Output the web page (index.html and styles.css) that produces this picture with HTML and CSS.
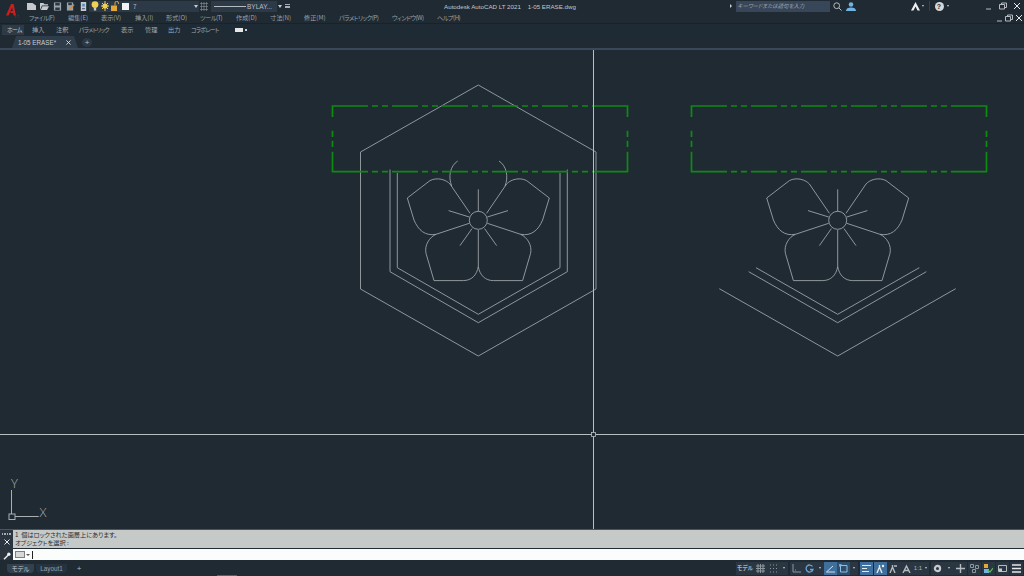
FILE: index.html
```html
<!DOCTYPE html>
<html lang="ja">
<head>
<meta charset="utf-8">
<title>Autodesk AutoCAD LT 2021</title>
<link rel="stylesheet" href="styles.css">
</head>
<body>
<div class="app">
  <header class="head">
    <div class="logo-col">
      <svg class="logo" viewBox="0 0 14 15"><path class="logo-a" d="M1 12.500 6 1h2.600L11 12.500H8.600L8.100 10H5.200L6 8h1.800L7.100 4.400 3.600 12.500z"/><text class="logo-lt" x="9.500" y="14.600">LT</text></svg>
    </div>
    <div class="head-main">
      <div class="row-top">
        <div class="qat">
          <svg class="qi" viewBox="0 0 9 9"><path class="f-lite" d="M0 1h5.500L9 3.500V8H0z"/></svg>
          <svg class="qi" viewBox="0 0 9 9"><path class="f-lite" d="M0 1h3.500l1 1.200H8v1.300H2L0 8z"/><path class="f-lite" d="M2.500 4.200H9L7 8H.8z"/></svg>
          <svg class="qi" viewBox="0 0 9 10"><path class="f-mid" d="M.5.500h8v9h-8z"/><path class="f-dark" d="M2 1h5v3H2zM2 6h5v3H2z"/></svg>
          <svg class="qi" viewBox="0 0 9 10"><path class="f-mid" d="M.5.500h7v9h-7z"/><path class="f-dark" d="M2 1h4v2.500H2z"/><path class="f-orange" d="M3 7 8 2.500l1 1L4 8z"/></svg>
          <svg class="qi" viewBox="0 0 9 10"><path class="f-lite" d="M1.500 0h6v10h-6z"/><path class="f-blue" d="M3 2h3v3H3z"/><path class="f-dark" d="M3 7h3v1H3z"/></svg>
        </div>
        <div class="layer-box">
          <svg class="li" viewBox="0 0 8 10"><circle class="f-yellow" cx="4" cy="3.600" r="3.400"/><path class="f-lite" d="M2.800 7h2.400v2.500H2.800z"/></svg>
          <svg class="li" viewBox="0 0 8 10"><circle class="f-yellow" cx="4" cy="5" r="2.600"/><path class="s-yellow" d="M4 0v10M0 5h8M1 2l6 6M7 2 1 8"/></svg>
          <svg class="li" viewBox="0 0 8 10"><path class="f-amber" d="M0 4.500h6V10H0z"/><path class="s-amber" d="M4 4.500V2a1.700 1.700 0 0 1 3.400 0v1"/></svg>
          <span class="swatch"></span>
          <span class="layer-num">7</span>
          <span class="caret caret-end"></span>
        </div>
        <svg class="hatch" viewBox="0 0 8 9"><path class="s-hatch" d="M0 1.500h8M0 4.500h8M0 7.500h8M1.500 0v9M4 0v9M6.500 0v9"/></svg>
        <div class="lw-box"><span class="lw-line"></span><span class="lw-text">BYLAY...</span></div>
        <span class="caret caret-lw"></span>
        <span class="mini-down"></span>
        <div class="title">Autodesk AutoCAD LT 2021&nbsp;&nbsp;&nbsp; 1-05 ERASE.dwg</div>
        <div class="top-right">
          <span class="tri-right"></span>
          <div class="search">キーワードまたは語句を入力</div>
          <svg class="mag" viewBox="0 0 9 9"><circle class="s-lite" cx="3.700" cy="3.700" r="2.900"/><path class="s-lite" d="m6 6 2.600 2.600"/></svg>
          <svg class="user" viewBox="0 0 10 9"><circle class="f-sky" cx="5" cy="2.500" r="2.300"/><path class="f-sky" d="M0 9c0-2.500 2-3.500 5-3.500s5 1 5 3.500z"/></svg>
          <svg class="acad-a" viewBox="0 0 9 9"><path class="f-white" d="M4.500 0 9 8.500H6.500L4.500 4.500 2.500 8.500H0z"/></svg>
          <span class="dot"></span>
          <span class="vsep"></span>
          <span class="help">?</span>
          <span class="dot"></span>
          <div class="win win-app">
            <svg class="wc" viewBox="0 0 8 8"><path class="s-lite" d="M1 7h5"/></svg>
            <svg class="wc" viewBox="0 0 8 8"><path class="s-lite" d="M.5 2.500h5v4.500h-5zM2.500 2.500V1h5v4.500h-2"/></svg>
            <svg class="wc" viewBox="0 0 8 8"><path class="s-white" d="m1 1 6 6M7 1 1 7"/></svg>
          </div>
        </div>
      </div>
      <nav class="row-menu">
        <span class="kana">ファイル(F)</span><span>編集(E)</span><span>表示(V)</span><span>挿入(I)</span><span>形式(O)</span><span class="kana">ツール(T)</span><span>作成(D)</span><span>寸法(N)</span><span>修正(M)</span><span class="kana">パラメトリック(P)</span><span class="kana">ウィンドウ(W)</span><span class="kana">ヘルプ(H)</span>
        <div class="win win-doc">
          <svg class="wd" viewBox="0 0 8 8"><path class="s-lite" d="M2 7h5"/></svg>
          <svg class="wd" viewBox="0 0 8 8"><path class="s-lite" d="M.5 2.500h5v4.500h-5zM2.500 2.500V1h5v4.500h-2"/></svg>
          <svg class="wd" viewBox="0 0 8 8"><path class="s-white" d="m1 1 6 6M7 1 1 7"/></svg>
        </div>
      </nav>
    </div>
  </header>
  <nav class="row-ribbon">
    <span class="rtab rtab-on kana-tight">ホーム</span><span class="rtab">挿入</span><span class="rtab">注釈</span><span class="rtab kana-tight">パラメトリック</span><span class="rtab">表示</span><span class="rtab">管理</span><span class="rtab">出力</span><span class="rtab kana-tight">コラボレート</span>
    <span class="rib-extra"><span class="rib-chip"></span><span class="rib-dot"></span></span>
  </nav>
  <div class="row-doc">
    <div class="doc-tab"><span>1-05 ERASE*</span><svg class="doc-x" viewBox="0 0 6 6"><path class="s-white" d="m.5.500 5 5M5.500.500l-5 5"/></svg></div>
    <span class="doc-plus">+</span>
  </div>
  <div class="strip"></div>

  <main class="canvas">
    <svg class="draw" viewBox="0 50 1024 479">
      <defs>
        <g id="flower">
          <circle cx="0" cy="0" r="9"/>
          <path d="M-8.300-7-28.300-36.300C-32-40.500-41-43.500-48.300-39.700L-71-22.300-64.300-.3C-60 10-53 16-42.300 14L-9 3"/>
          <path d="M8.300-7 28.300-36.300C32-40.500 41-43.500 48.300-39.700L71-22.300 64.300-.3C60 10 53 16 42.300 14L9 3"/>
          <path d="M0 9.700V46.300C-1.500 55-7 60.300-15 60.300H-44.300L-52.300 33C-54 25-49 17-42.300 14"/>
          <path d="M0 46.300C1.500 55 7 60.300 15 60.300H44.300L52.300 33C54 25 49 17 42.300 14"/>
          <path d="M0-31V-9M-29.700-9.700-9-3.300M29.700-9.700 9-3.300M-18.300 25.300-6.300 8.300M18.300 25.300 6.300 8.300"/>
        </g>
        <path id="frame" d="M368 106H332.500V117M372 106h6M382 106h6M392 106h26M422 106h6M432 106h6M442 106h26M472 106h6M482 106h6M492 106h26M522 106h6M532 106h6M542 106h26M572 106h6M582 106h6M592 106h35.500V117M332.500 130.700v6.300M332.500 140.700v6.300M332.500 151.700v20H368M372 171.700h6M382 171.700h6M392 171.700h26M422 171.700h6M432 171.700h6M442 171.700h26M472 171.700h6M482 171.700h6M492 171.700h26M522 171.700h6M532 171.700h6M542 171.700h26M572 171.700h6M582 171.700h6M592 171.700h35.500v-20M627.500 147v-6.300M627.500 137v-6.300"/>
      </defs>
      <g class="lines">
        <path d="M360.500 289V152L478.300 85 596 152V289L478.300 356z"/>
        <path d="M390 169.500V271.700L478.300 322.700 567.300 271.700V169.500"/>
        <path d="M397.300 173V267.700L478.300 314.300 560 267.700V173"/>
        <path d="M457.700 161C450 166 448 177 451.700 186M499 161C506.700 166 508.700 177 505 186"/>
        <use href="#flower" transform="translate(478.300 220.300)"/>
        <use href="#flower" transform="translate(837.700 220.300)"/>
        <path d="M719.300 288.700 837.700 356 955.700 288.700M748.700 271.700 837.700 322.700 926.300 271.700M756 267.700 837.700 314.300 919.300 267.700"/>
      </g>
      <g class="frames">
        <use href="#frame"/>
        <use href="#frame" transform="translate(359 0)"/>
      </g>
      <path class="cross" d="M593.500 50V529M0 434.500H1024"/>
      <rect class="pick" x="591.500" y="432.500" width="4" height="4"/>
      <g class="ucs">
        <path d="M11.500 490V514M15 516.500H38.700"/>
        <rect x="9" y="514" width="6" height="5.500"/>
        <text x="11" y="488">Y</text>
        <text x="39.500" y="517">X</text>
      </g>
    </svg>
  </main>

  <section class="cmd">
    <div class="cmd-side">
      <span class="grip"></span>
      <svg class="cmd-x" viewBox="0 0 6 6"><path class="s-white" d="m.5.500 5 5M5.500.500l-5 5"/></svg>
      <svg class="cmd-wrench" viewBox="0 0 8 8"><path class="s-wrench" d="M1 7.200 5 3.200"/><circle class="f-white" cx="5.800" cy="2.200" r="1.700"/></svg>
    </div>
    <div class="cmd-body">
      <div class="cmd-history">
        <div>1&nbsp; 個はロックされた画層上にあります。</div>
        <div>オブジェクトを選択 :</div>
      </div>
      <div class="cmd-input">
        <span class="cmd-icon"></span><span class="cmd-caret"></span><span class="cursor"></span>
      </div>
    </div>
  </section>

  <footer class="status">
    <div class="ltabs">
      <span class="ltab ltab-on">モデル</span>
      <span class="ltab">Layout1</span>
      <span class="lplus">+</span>
    </div>
    <span class="bottom-mark"></span>
    <div class="sb">
      <div class="sg">
        <span class="si si-model">モデル</span>
        <span class="si"><svg viewBox="0 0 9 9"><path class="s-dim" d="M0 2h9M0 4.500h9M0 7h9M2 0v9M4.500 0v9M7 0v9"/></svg></span>
        <span class="si"><svg viewBox="0 0 9 9"><path class="s-dots" d="M1 1h7M1 4.500h7M1 8h7"/></svg></span>
        <span class="si si-ar"><span class="dot"></span></span>
      </div>
      <div class="sg">
        <span class="si"><svg viewBox="0 0 9 9"><path class="s-dim" d="M1 0v8h8M3 6h1"/></svg></span>
        <span class="si"><svg viewBox="0 0 9 9"><path class="s-blue" d="M7.500 2.500A3.500 3.500 0 1 0 8 5.500H5"/></svg></span>
        <span class="si si-ar"><span class="dot"></span></span>
        <span class="si si-active"><svg viewBox="0 0 9 9"><path class="s-pale" d="M0 8h9M1 7.500 7 2"/></svg></span>
        <span class="si si-soft"><svg viewBox="0 0 9 9"><path class="s-sky" d="M1.500 1.500h6.500v6.500H1.500zM0 0h2v2H0z"/></svg></span>
        <span class="si si-ar"><span class="dot"></span></span>
      </div>
      <div class="sg">
        <span class="si si-active"><svg viewBox="0 0 9 9"><path class="s-white" d="M0 1.500h9M0 4.500h5M0 7.500h7"/></svg></span>
      </div>
      <div class="sg">
        <span class="si si-active"><svg viewBox="0 0 9 9"><path class="s-white s-thick" d="M1 9 3.500 3 6 9M3.500 3 3.500 1"/><circle class="f-white" cx="7" cy="2" r="1.200"/></svg></span>
        <span class="si"><svg viewBox="0 0 9 9"><path class="s-lite s-thick" d="M1 9 3.500 3 6 9M3.500 3 3.500 1M5 2h3"/></svg></span>
        <span class="si"><svg viewBox="0 0 9 9"><path class="s-lite s-thick" d="M1 9 4.500 2 8 9M2 6.500h5"/></svg></span>
        <span class="si si-ratio">1:1</span>
        <span class="si si-ar2"><span class="dot"></span></span>
      </div>
      <div class="sg">
        <span class="si"><svg viewBox="0 0 9 9"><circle class="s-gear" cx="4.500" cy="4.500" r="2.600"/></svg></span>
        <span class="si si-ar3"><span class="dot"></span></span>
        <span class="si"><svg viewBox="0 0 9 9"><path class="s-lite s-thick" d="M4.500 0v9M0 4.500h9"/></svg></span>
      </div>
      <div class="sg sg-tight">
        <span class="si"><svg viewBox="0 0 9 9"><path class="s-dim" d="M.5.500h3v3h-3zM5.500 1.500h3v3h-3zM2.500 5.500h3v3h-3z"/></svg></span>
        <span class="si"><svg viewBox="0 0 9 9"><path class="f-amber" d="M0 0h4v4H0z"/><path class="f-sky" d="M0 5h5v4H0z"/><path class="s-green" d="m4 6 2 2 3-4"/></svg></span>
        <span class="si"><svg viewBox="0 0 9 9"><path class="s-lite" d="M.5 1.500h8v6h-8z"/><path class="f-lite" d="M1 4.500h3v3H1z"/></svg></span>
        <span class="si"><svg viewBox="0 0 9 9"><path class="s-white s-thick" d="M0 1h9M0 4.500h9M0 8h9"/></svg></span>
      </div>
    </div>
  </footer>
</div>
</body>
</html>
```
FILE: styles.css
```css
* { box-sizing: border-box; }
html, body { margin: 0; padding: 0; }
body {
  width: 1024px;
  height: 576px;
  overflow: hidden;
  background: #1f2a32;
  font-family: "Noto Sans CJK JP", "Noto Sans", sans-serif;
  font-feature-settings: "palt";
  color: #a7adb3;
  font-size: 6.200px;
}
svg { display: block; }
.app { display: flex; flex-direction: column; width: 1024px; height: 576px; }

/* header */
.head { display: flex; flex: none; height: 24px; border-bottom: 1px solid #18222a; }
.logo-col { width: 27px; padding: 3px 0 0 5px; }
.logo { width: 14px; height: 15px; }
.logo-a { fill: #c8201f; }
.logo-lt { fill: #8a2a25; font-size: 4px; font-family: "Liberation Sans", sans-serif; }
.head-main { flex: 1; display: flex; flex-direction: column; }
.row-top { display: flex; align-items: center; height: 12px; position: relative; }
.qat { display: flex; gap: 4px; align-items: center; }
.qi { width: 9px; height: 9px; }
.layer-box {
  display: flex; align-items: center; gap: 2px;
  width: 110px; height: 11px; margin-left: 1px; padding-left: 2px;
  background: #2c3947;
}
.li { width: 8px; height: 10px; }
.swatch { width: 7px; height: 7px; margin-left: 1px; background: #f2f2f2; }
.layer-num { margin-left: 2px; font-size: 6.500px; color: #b8bdc2; }
.caret { width: 0; height: 0; border-left: 2.500px solid transparent; border-right: 2.500px solid transparent; border-top: 3px solid #c8ccd0; }
.caret-end { margin-left: auto; margin-right: 1px; }
.hatch { width: 8px; height: 9px; margin-left: 1px; }
.lw-box {
  display: flex; align-items: center;
  width: 66px; height: 11px; margin-left: 3px; padding-left: 3px;
  background: #2c3947;
}
.lw-line { width: 32px; height: 1px; background: #b5babf; }
.lw-text { margin-left: 1px; font: 6.500px "Liberation Sans", sans-serif; color: #b8bdc2; }
.caret-lw { margin-left: 1px; }
.mini-down { width: 5px; height: 4px; margin-left: 3px; border-top: 1px solid #aab; border-bottom: 2px solid #aab; }
.title {
  flex: 1; text-align: center;
  font: 6.200px "Liberation Sans", sans-serif; color: #c3c8cc;
  white-space: nowrap;
}
.top-right { display: flex; align-items: center; width: 294px; }
.tri-right { width: 0; height: 0; border-top: 2px solid transparent; border-bottom: 2px solid transparent; border-left: 2.500px solid #c8ccd0; }
.search {
  width: 94px; height: 11px; margin-left: 3.500px; padding-left: 2px;
  background: #38465a; color: #9ea6ae;
  font-size: 5.400px; font-style: italic; line-height: 10px; white-space: nowrap;
}
.mag { width: 9px; height: 9px; margin-left: 3px; }
.user { width: 10px; height: 9px; margin-left: 4px; }
.acad-a { width: 9px; height: 9px; margin-left: 55px; }
.dot { width: 0; height: 0; border-left: 1.500px solid transparent; border-right: 1.500px solid transparent; border-top: 2px solid #c8ccd0; }
.acad-a + .dot { margin-left: 2px; }
.vsep { width: 1px; height: 10px; margin-left: 5px; background: #34414d; }
.help {
  width: 9px; height: 9px; margin-left: 5px; border-radius: 50%;
  background: #d5d8da; color: #1f2a32;
  font: bold 7px/9px "Liberation Sans", sans-serif; text-align: center;
}
.help + .dot { margin-left: 3px; }
.win { display: flex; align-items: center; margin-left: auto; }
.win-app { gap: 6px; padding-right: 3px; }
.wc { width: 8px; height: 8px; }
.row-menu {
  display: grid;
  grid-template-columns: 39px 33px 34px 31px 34px 36px 34px 34px 35px 53px 45px 1fr auto;
  align-items: center; height: 11px; padding: 0 1px 0 2px;
  white-space: nowrap; color: #9aa1a7;
}
.kana { letter-spacing: -.55px; }
.win-doc { gap: 2px; }
.wd { width: 8px; height: 8px; }

/* ribbon */
.row-ribbon {
  display: grid; flex: none;
  grid-template-columns: 25px 24px 23px 42px 24px 23px 23px 44px auto;
  align-items: center; height: 12px; padding-left: 7px; white-space: nowrap; color: #a2a9af;
  background: #1f2b34;
}
.rtab { line-height: 10px; }
.kana-tight { font-size: 5.800px; letter-spacing: -.6px; }
.rtab-on { background: #2e3a46; margin-left: -5px; padding-left: 5px; width: 22px; color: #c4c8cc; }
.rib-extra { display: flex; align-items: center; gap: 2px; }
.rib-chip { width: 8px; height: 4px; background: #e4e6e8; }
.rib-dot { width: 2px; height: 2px; background: #c8ccd0; }

/* document tabs */
.row-doc { display: flex; flex: none; align-items: center; height: 12px; padding-left: 12px; }
.doc-tab {
  display: flex; align-items: center; justify-content: space-between;
  width: 66px; height: 12px; padding: 0 7px 0 6px;
  background: #2f3c4a; color: #c8ccd0;
  font: 6.300px "Liberation Sans", sans-serif;
  clip-path: polygon(4px 0, 62px 0, 66px 100%, 0 100%);
}
.doc-x { width: 5px; height: 5px; }
.doc-plus {
  width: 10px; height: 9px; margin-left: 4px; border-radius: 50%;
  background: #2c3845; color: #b8bdc2; text-align: center;
  font: 8px/9px "Liberation Sans", sans-serif;
}
.strip { flex: none; height: 2px; background: #3a4959; }

/* canvas */
.canvas { flex: none; height: 479px; }
.draw { width: 1024px; height: 479px; }
.lines { fill: none; stroke: #a3aaad; stroke-width: .85; }
.frames { fill: none; stroke: #0d8c12; stroke-width: 1.700; }
.cross { fill: none; stroke: #b9bec0; stroke-width: 1; }
.pick { fill: #1f2a32; stroke: #b9bec0; stroke-width: .8; }
.ucs path, .ucs rect { fill: none; stroke: #a9afb2; stroke-width: 1; }
.ucs text { fill: #a9afb2; font: 300 13px "Open Sans", sans-serif; }

/* command line */
.cmd { display: flex; flex: none; height: 31px; border-top: 1px solid #4a555c; background: #1f2a32; }
.cmd-side { width: 13px; display: flex; flex-direction: column; align-items: center; background: #2a3540; }
.grip { width: 9px; height: 2px; margin-top: 3px; background: repeating-linear-gradient(90deg, #aab 0 1.500px, #2a3540 1.500px 2.500px); }
.cmd-x { width: 6px; height: 6px; margin-top: 4px; }
.cmd-wrench { width: 8px; height: 8px; margin-top: 7px; }
.cmd-body { flex: 1; display: flex; flex-direction: column; }
.cmd-history {
  height: 18px; background: #c5c9c7; color: #2a2f33;
  padding: 1px 0 0 2px; font-size: 6.200px; line-height: 8px;
}
.cmd-input {
  display: flex; align-items: center; height: 11px; margin-top: 1px;
  padding-left: 2px; background: #fbfdfd;
}
.cmd-icon { width: 10px; height: 7px; border: 1px solid #7b8084; background: #d6d8da; }
.cmd-caret { width: 0; height: 0; margin-left: 1px; border-left: 2px solid transparent; border-right: 2px solid transparent; border-top: 2.500px solid #555; }
.cursor { width: 1px; height: 8px; margin-left: 2px; background: #222; }

/* status bar */
.status { flex: none; height: 16px; display: flex; align-items: center; position: relative; background: #1f2a32; }
.ltabs { display: flex; align-items: center; padding-left: 7px; }
.ltab {
  width: 27px; height: 9px; margin-right: 2px; text-align: center; line-height: 9px;
  background: #26323d; color: #98a0a6; border-radius: 0 0 4px 4px;
}
.ltab + .ltab { width: 31px; font: 6.300px/9px "Liberation Sans", sans-serif; }
.ltab-on { background: #33404e; color: #c8ccd0; }
.lplus { margin-left: 6px; width: 8px; text-align: center; font: 8px/9px "Liberation Sans", sans-serif; color: #b0b5ba; }
.bottom-mark { position: absolute; left: 217px; bottom: 0; width: 20px; height: 1px; background: #55606a; }
.sb { display: flex; align-items: center; margin-left: auto; padding-right: 1px; gap: 2px; height: 13px; }
.sg { display: flex; height: 13px; background: #2a3642; }
.sg:nth-child(3) { margin-right: -1px; }
.sg-tight { gap: 1px; margin-left: -1px; background: none; }
.sg-tight .si { background: #2a3642; }
.si { display: flex; align-items: center; justify-content: center; width: 13px; height: 13px; }
.si svg { width: 9px; height: 9px; }
.si-model { width: 18px; color: #b0b5ba; font-size: 5.600px; font-weight: 700; white-space: nowrap; }
.si-ar { width: 8px; }
.si-ar2 { width: 6px; }
.si-ar3 { width: 10px; }
.si-active { background: #3f6f9d; }
.si-soft { background: #2f4e6c; }
.si-ratio { width: 10px; font: 6px "Liberation Sans", sans-serif; color: #b0b5ba; }

/* icon paints */
.f-lite { fill: #c6cace; }
.f-mid { fill: #9aa3aa; }
.f-dark { fill: #2b3844; }
.f-orange { fill: #d98a2b; }
.f-blue { fill: #5a8fc0; }
.f-yellow { fill: #f0cf55; }
.f-amber { fill: #e2a83a; }
.f-sky { fill: #71b4e3; }
.f-white { fill: #eef0f1; }
.s-yellow, .s-amber, .s-lite, .s-white, .s-hatch, .s-dim, .s-dots, .s-blue, .s-pale, .s-sky, .s-wrench, .s-gear, .s-green { fill: none; stroke-width: 1; }
.s-yellow { stroke: #f0cf55; }
.s-amber { stroke: #e2a83a; }
.s-lite { stroke: #b6bbc0; }
.s-white { stroke: #e6e8ea; }
.s-hatch { stroke: #7f878d; stroke-width: .7; }
.s-dim { stroke: #8f979e; }
.s-dots { stroke: #8f979e; stroke-dasharray: 1 2; }
.s-blue { stroke: #6aa6d8; stroke-width: 1.300; }
.s-pale { stroke: #cfe0ee; }
.s-sky { stroke: #8cc0e8; }
.s-wrench { stroke: #eef0f1; stroke-width: 1.500; }
.s-gear { stroke: #c6cace; stroke-width: 2.200; }
.s-green { stroke: #56c04f; stroke-width: 1.200; }
.s-thick { stroke-width: 1.400; }
```
